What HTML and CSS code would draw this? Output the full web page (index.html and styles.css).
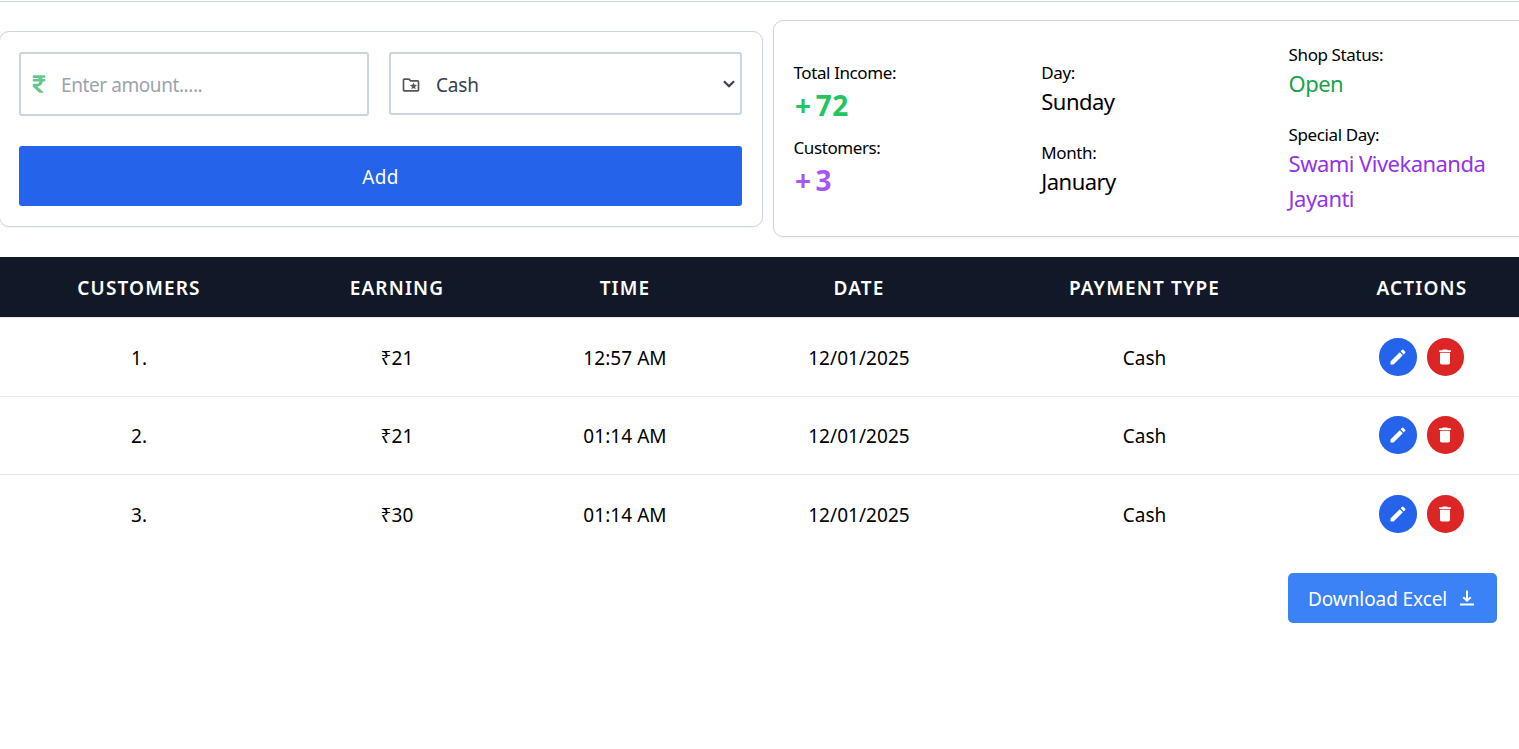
FILE: index.html
```html
<!DOCTYPE html>
<html lang="en">
<head>
<meta charset="utf-8">
<title>Shop Income</title>
<link rel="stylesheet" href="styles.css">
</head>
<body>
<svg class="sprite" aria-hidden="true">
  <symbol id="pencil" viewBox="0 0 24 24"><path d="M3 17.25V21h3.75L17.81 9.94l-3.75-3.75L3 17.25zM20.71 7.04a1 1 0 0 0 0-1.41l-2.34-2.34a1 1 0 0 0-1.41 0l-1.83 1.83 3.75 3.75 1.83-1.83z"/></symbol>
  <symbol id="trash" viewBox="0 0 24 24"><path d="M6 19c0 1.100.9 2 2 2h8c1.100 0 2-.9 2-2V7H6v12zM19 4h-3.500l-1-1h-5l-1 1H5v2h14V4z"/></symbol>
</svg>
<main class="page">
  <section class="panels">
    <form class="card entry">
      <div class="fields">
        <div class="field amount">
          <svg class="rupee" viewBox="0 0 320 512"><path d="M308 96c6.600 0 12-5.400 12-12V44c0-6.600-5.400-12-12-12H12C5.400 32 0 37.400 0 44v44.800c0 6.600 5.400 12 12 12h85.300c27.300 0 48.300 10.300 60.700 27.200H12c-6.600 0-12 5.400-12 12v40c0 6.600 5.400 12 12 12h158.800c-6.200 36.100-33 58.600-74.800 58.600H12c-6.600 0-12 5.400-12 12v53c0 3.300 1.400 6.500 3.900 8.800l165.100 152.400a12 12 0 0 0 8.100 3.200h82.600c10.900 0 16.100-13.400 8.100-20.800L116.900 319.900c76.500-2.300 131.100-53.400 138.300-127.900H308c6.600 0 12-5.400 12-12v-40c0-6.600-5.400-12-12-12h-58.700c-3.500-11.500-8.300-22.200-14.300-32H308z"/></svg>
          <span class="placeholder">Enter amount.....</span>
        </div>
        <div class="field payment">
          <svg class="folder" viewBox="0 0 24 24"><path d="M20 6h-8l-2-2H4c-1.100 0-2 .9-2 2v12c0 1.100.9 2 2 2h16c1.100 0 2-.9 2-2V8c0-1.100-.9-2-2-2zm0 12H4V6h5.170l2 2H20v10zm-6.920-3.040L12.390 17 15 15.470 17.610 17l-.69-2.960L19.220 12.050l-3.030-.26L15 9l-1.190 2.790-3.030.26 2.300 1.990z"/></svg>
          <span class="choice">Cash</span>
          <svg class="chevron" viewBox="0 0 12 8"><path d="M1 1.300l5 5 5-5"/></svg>
        </div>
      </div>
      <button class="add" type="button"><span>Add</span></button>
    </form>
    <div class="card summary">
      <div class="facts totals">
        <div><p class="label">Total Income:</p><p class="total income"><span class="sign">+</span>72</p></div>
        <div><p class="label">Customers:</p><p class="total count"><span class="sign">+</span>3</p></div>
      </div>
      <div class="facts">
        <div><p class="label">Day:</p><p class="value">Sunday</p></div>
        <div><p class="label">Month:</p><p class="value">January</p></div>
      </div>
      <div class="facts">
        <div><p class="label">Shop Status:</p><p class="value open">Open</p></div>
        <div><p class="label">Special Day:</p><p class="value special">Swami Vivekananda<br>Jayanti</p></div>
      </div>
    </div>
  </section>
  <table class="sales">
    <colgroup><col class="c1"><col class="c2"><col class="c3"><col class="c4"><col class="c5"><col class="c6"></colgroup>
    <thead><tr><th>Customers</th><th>Earning</th><th>Time</th><th>Date</th><th>Payment Type</th><th>Actions</th></tr></thead>
    <tbody>
      <tr><td>1.</td><td>₹21</td><td>12:57 AM</td><td>12/01/2025</td><td>Cash</td><td><div class="actions"><button class="round edit" aria-label="Edit"><svg><use href="#pencil"/></svg></button><button class="round delete" aria-label="Delete"><svg><use href="#trash"/></svg></button></div></td></tr>
      <tr><td>2.</td><td>₹21</td><td>01:14 AM</td><td>12/01/2025</td><td>Cash</td><td><div class="actions"><button class="round edit" aria-label="Edit"><svg><use href="#pencil"/></svg></button><button class="round delete" aria-label="Delete"><svg><use href="#trash"/></svg></button></div></td></tr>
      <tr><td>3.</td><td>₹30</td><td>01:14 AM</td><td>12/01/2025</td><td>Cash</td><td><div class="actions"><button class="round edit" aria-label="Edit"><svg><use href="#pencil"/></svg></button><button class="round delete" aria-label="Delete"><svg><use href="#trash"/></svg></button></div></td></tr>
    </tbody>
  </table>
  <div class="footer">
    <button class="download" type="button"><span>Download Excel</span><svg viewBox="0 0 16 16"><path d="M8 0.500v10M4.300 7.200L8 10.700l3.700-3.500M1 14.500h14"/></svg></button>
  </div>
</main>
</body>
</html>
```
FILE: styles.css
```css
* { box-sizing: border-box; }
body {
  margin: 0;
  background: #fff;
  color: #000;
  font-family: "Noto Sans", "Open Sans", sans-serif;
  font-size: 19px;
  overflow: hidden;
}
p { margin: 0; }
button { border: 0; padding: 0; font: inherit; color: #fff; }
.sprite { display: none; }
.page { width: 1539px; padding-top: 1px; }
.panels {
  display: flex;
  align-items: center;
  gap: 10px;
  border-top: 1px solid #cbd5e1;
  padding: 18px 0 20px;
  margin-left: -1px;
}
.card {
  border: 1px solid #cbd5e1;
  border-radius: 10px;
  box-shadow: 0 1px 2px rgba(0, 0, 0, .05);
}
.entry { width: 764px; height: 196px; padding: 20px 20px 20px 19px; }
.fields { display: flex; gap: 20px; margin-bottom: 30px; }
.field {
  display: flex;
  align-items: center;
  border: 2px solid #cbd5e1;
  border-radius: 3px;
}
.amount { width: 350px; height: 64px; padding: 2px 11px 0; }
.payment { width: 353px; height: 63px; padding: 3px 5px 0 10px; }
.rupee { width: 14px; height: 20px; margin: -1px 15px 0 0; fill: #67c58b; }
.placeholder { color: #9ca3af; letter-spacing: -.42px; }
.folder { width: 20px; height: 20px; margin: 0 15px 0 0; fill: #555; }
.choice { color: #374151; letter-spacing: -.2px; flex: 1; }
.chevron { width: 12px; height: 8px; margin-top: -2px; fill: none; stroke: #374151; stroke-width: 2.200; }
.add {
  display: block;
  width: 723px;
  height: 60px;
  border-radius: 3px;
  background: #2563eb;
  padding-top: 2px;
  letter-spacing: .3px;
}
.summary {
  width: 784px;
  height: 217px;
  padding: 0 20px;
  display: grid;
  grid-template-columns: repeat(3, 247.3px);
  align-items: center;
}
.facts { display: flex; flex-direction: column; gap: 20px; }
.totals { gap: 10px; }
.label { font-size: 17px; line-height: 23px; padding-top: 2px; letter-spacing: -.4px; }
.totals .label { margin-left: -.5px; }
.value { font-size: 22px; line-height: 35px; letter-spacing: -.53px; }
.total { font-size: 28px; line-height: 38px; padding: 2px 0 0 1px; font-weight: 700; }
.sign { margin-right: 4.500px; }
.income { color: #22c55e; letter-spacing: .3px; }
.count { color: #a855f7; }
.open { color: #16a34a; }
.special { color: #9333ea; }
.sales { width: 1539px; table-layout: fixed; border-collapse: collapse; text-align: center; }
.c1 { width: 277px; }
.c2 { width: 239px; }
.c3 { width: 217px; }
.c4 { width: 251px; }
.c5 { width: 320px; }
.c6 { width: 235px; }
.sales th {
  height: 60px;
  padding: 2px 0 0 1px;
  background: #111827;
  color: #fff;
  font-size: 19px;
  font-weight: 600;
  letter-spacing: 1.150px;
  text-transform: uppercase;
}
.sales td { height: 78px; padding: 2px 0 0 1px; border-top: 1px solid #e5e7eb; letter-spacing: .05px; }
.sales tr:first-child td { height: 79px; padding-top: 3px; }
.sales tr:last-child td { height: 79px; }
.actions { display: flex; justify-content: center; gap: 10px; margin: -2px 0 0 -1px; }
.round {
  display: grid;
  place-items: center;
  width: 37.500px;
  height: 37.500px;
  border-radius: 50%;
}
.round svg { width: 20px; height: 20px; fill: #fff; }
.edit { background: #2563eb; }
.delete { background: #dc2626; }
.footer { display: flex; justify-content: flex-end; padding: 20px 42px 0 0; }
.download {
  display: flex;
  align-items: center;
  gap: 12px;
  width: 209px;
  height: 50px;
  padding: 2px 20px 0;
  border-radius: 5px;
  background: #3b82f6;
  white-space: nowrap;
  letter-spacing: -.08px;
}
.download svg { width: 16px; height: 16px; margin: -2px 0 0 0; fill: none; stroke: #fff; stroke-width: 2; }
```
